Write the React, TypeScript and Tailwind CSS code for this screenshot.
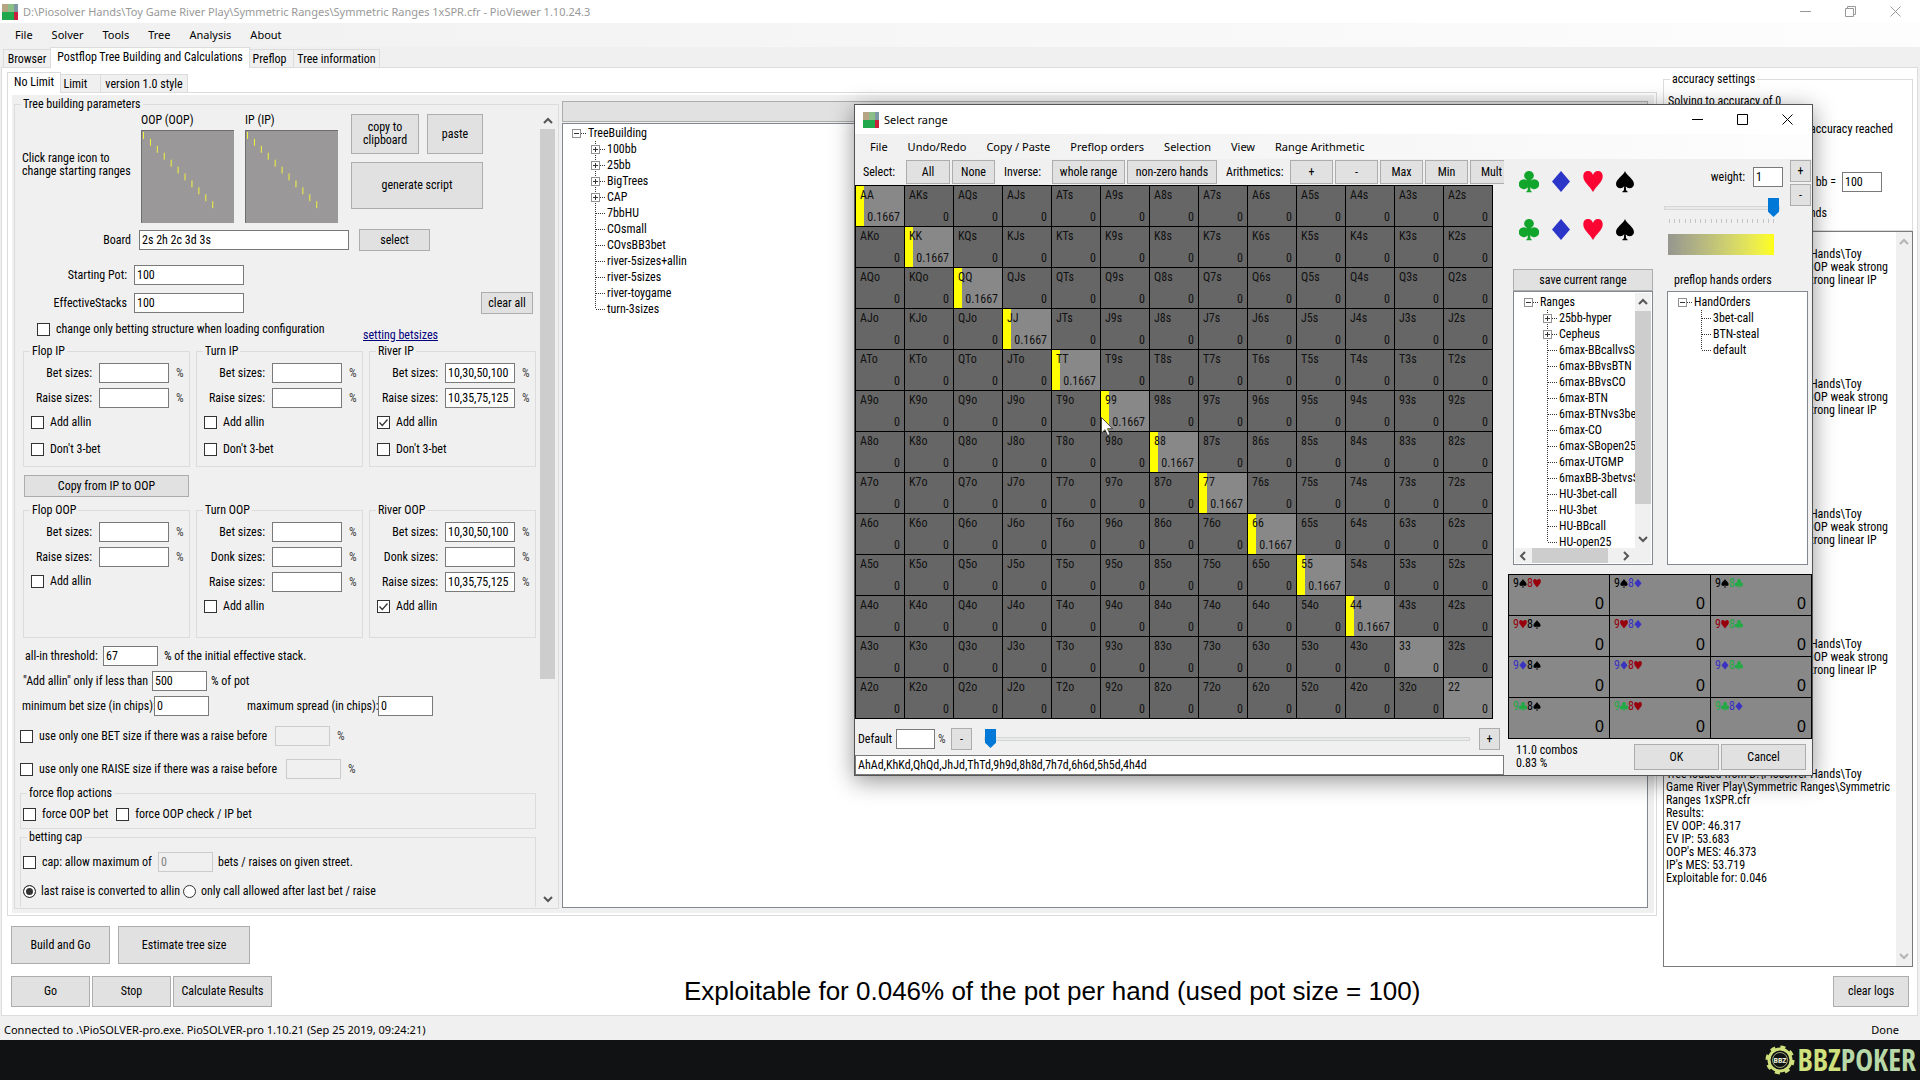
import { type ReactNode } from 'react';
import clsx from 'clsx';

const RANKS = ['A', 'K', 'Q', 'J', 'T', '9', '8', '7', '6', '5', '4', '3', '2'];

const TREE_CONFIGS: TreeNode[] = [
  { label: '100bb', expandable: true },
  { label: '25bb', expandable: true },
  { label: 'BigTrees', expandable: true },
  { label: 'CAP', expandable: true },
  { label: '7bbHU' },
  { label: 'COsmall' },
  { label: 'COvsBB3bet' },
  { label: 'river-5sizes+allin' },
  { label: 'river-5sizes' },
  { label: 'river-toygame' },
  { label: 'turn-3sizes' },
];

const RANGES: TreeNode[] = [
  { label: '25bb-hyper', expandable: true },
  { label: 'Cepheus', expandable: true },
  { label: '6max-BBcallvsSB' },
  { label: '6max-BBvsBTN' },
  { label: '6max-BBvsCO' },
  { label: '6max-BTN' },
  { label: '6max-BTNvs3bet' },
  { label: '6max-CO' },
  { label: '6max-SBopen25' },
  { label: '6max-UTGMP' },
  { label: '6maxBB-3betvsSB' },
  { label: 'HU-3bet-call' },
  { label: 'HU-3bet' },
  { label: 'HU-BBcall' },
  { label: 'HU-open25' },
];

const HAND_ORDERS: TreeNode[] = [{ label: '3bet-call' }, { label: 'BTN-steal' }, { label: 'default' }];

const LOG_BLOCK = [
  'Tree loaded from D:\\Piosolver Hands\\Toy',
  'Game River Play\\IP Strong vs OOP weak strong',
  'linear IP condensed range vs strong linear IP',
  '', '', '', '', '', '', '',
];

const LOG_TEXT = [
  '',
  ...LOG_BLOCK,
  ...LOG_BLOCK,
  ...LOG_BLOCK,
  ...LOG_BLOCK,
  'Tree loaded from D:\\Piosolver Hands\\Toy',
  'Game River Play\\Symmetric Ranges\\Symmetric',
  'Ranges 1xSPR.cfr',
  'Results:',
  'EV OOP: 46.317',
  'EV IP: 53.683',
  "OOP's MES: 46.373",
  "IP's MES: 53.719",
  'Exploitable for: 0.046',
].join('\n');

type Suit = 'c' | 'd' | 'h' | 's';

const SUIT_PATHS: Record<Suit, string> = {
  c: 'M10 0a4.6 4.6 0 0 1 3.2 8.1l-1.6 1.7a5 5 0 1 1-.4 6.4l.3 3.3 1.3 1.2v.6H7.200v-.6l1.3-1.2.3-3.3a5 5 0 1 1-.4-6.4L6.800 8.100A4.600 4.600 0 0 1 10 0z',
  d: 'M10 0l9 10.500L10 21 1 10.500z',
  h: 'M10 21C7 15 0 11 .3 5.200 .5 1 3 0 5 0c3 0 4.300 1.800 5 4 .7-2.200 2-4 5-4 2 0 4.500 1 4.700 5.200C20 11 13 15 10 21z',
  s: 'M10 0c1.500 4.500 9 8 9 13 0 2.600-2 4.300-4.300 4.300-1.800 0-3-.8-3.900-2l.3 4 1.500 1.300v.6H7.400v-.6l1.500-1.300.3-4c-.9 1.200-2.100 2-3.900 2C3 17.300 1 15.600 1 13c0-5 7.500-8.500 9-13z',
};

const SUIT_FILL: Record<Suit, string> = { c: '#12a52b', d: '#2b36c9', h: '#fb0532', s: '#000000' };
const CARD_FILL: Record<Suit, string> = { c: '#22aa44', d: '#3a32c0', h: '#98000c', s: '#000000' };

const COMBOS: [Suit, Suit][][] = [
  [['s', 'h'], ['s', 'd'], ['s', 'c']],
  [['h', 's'], ['h', 'd'], ['h', 'c']],
  [['d', 's'], ['d', 'h'], ['d', 'c']],
  [['c', 's'], ['c', 'h'], ['c', 'd']],
];

interface TreeNode {
  label: string;
  expandable?: boolean;
}

function Button({ className, children }: { className?: string; children: ReactNode }) {
  return (
    <button
      type="button"
      className={clsx('shrink-0 border border-[#adadad] bg-[#e1e1e1] hover:bg-[#e5f1fb]', className)}
    >
      {children}
    </button>
  );
}

function TextBox({ label, value = '', className, disabled }: { label: string; value?: string; className?: string; disabled?: boolean }) {
  return (
    <input
      type="text"
      aria-label={label}
      defaultValue={value}
      disabled={disabled}
      className={clsx(
        'h-5 shrink-0 border px-[2px] outline-none',
        disabled ? 'border-[#cccccc] bg-[#f0f0f0] text-[#808080]' : 'border-[#7a7a7a] bg-white',
        className,
      )}
    />
  );
}

function CheckBox({ label, checked, className }: { label: string; checked?: boolean; className?: string }) {
  return (
    <label className={clsx('flex h-[13px] items-center gap-[6px] whitespace-nowrap', className)}>
      <span className="grid size-[13px] shrink-0">
        <input
          type="checkbox"
          defaultChecked={checked}
          className="peer size-[13px] appearance-none border border-[#333333] bg-white [grid-area:1/1]"
        />
        <svg className="pointer-events-none hidden size-[13px] [grid-area:1/1] peer-checked:block" viewBox="0 0 13 13" fill="none" stroke="#333333" strokeWidth={1.3}>
          <path d="M2.500 6.500l2.800 3 5.200-6" />
        </svg>
      </span>
      {label}
    </label>
  );
}

function Radio({ label, checked }: { label: string; checked?: boolean }) {
  return (
    <label className="flex h-[13px] items-center gap-[5px] whitespace-nowrap">
      <input
        type="radio"
        name="cap-mode"
        defaultChecked={checked}
        className="size-[13px] appearance-none rounded-full border border-[#333333] bg-white checked:bg-[#333333] checked:shadow-[inset_0_0_0_2px_white]"
      />
      {label}
    </label>
  );
}

function Group({ title, className, children }: { title: string; className?: string; children?: ReactNode }) {
  return (
    <fieldset className={clsx('min-w-0 border border-[#dcdcdc]', className)}>
      <legend className="ml-[6px] px-[2px]">{title}</legend>
      {children}
    </fieldset>
  );
}

function SizeRow({ label, value }: { label: string; value?: string }) {
  return (
    <div className="flex items-center gap-[7px]">
      <span className="w-[68px] text-right whitespace-nowrap">{label}:</span>
      <TextBox label={label} value={value} className="w-[70px]" />
      <span className="text-[#444444]">%</span>
    </div>
  );
}

interface StreetProps {
  title: string;
  sizes: [string, string?][];
  allin?: boolean;
  threeBet?: boolean;
  className: string;
}

function StreetGroup({ title, sizes, allin, threeBet, className }: StreetProps) {
  return (
    <Group title={title} className={className}>
      <div className="flex flex-col gap-[5px] pt-[5px]">
        {sizes.map(([label, value]) => (
          <SizeRow key={label} label={label} value={value} />
        ))}
      </div>
      <CheckBox label="Add allin" checked={allin} className="mt-2 ml-[7px]" />
      {threeBet && <CheckBox label="Don't 3-bet" className="mt-[14px] ml-[7px]" />}
    </Group>
  );
}

function Chevron({ dir, className }: { dir: 'up' | 'down' | 'left' | 'right'; className?: string }) {
  const paths = { up: 'M1 7l4-4 4 4', down: 'M1 3l4 4 4-4', left: 'M7 1L3 5l4 4', right: 'M3 1l4 4-4 4' };
  return (
    <svg className={clsx('size-[10px] shrink-0', className)} viewBox="0 0 10 10" fill="none" stroke="currentColor" strokeWidth={2}>
      <path d={paths[dir]} />
    </svg>
  );
}

function TreeGutter({ expandable, expanded, isRoot, isLast }: { expandable?: boolean; expanded?: boolean; isRoot?: boolean; isLast?: boolean }) {
  return (
    <svg className="h-4 w-[17px] shrink-0" viewBox="0 0 17 16" fill="none" stroke="#333333" shapeRendering="crispEdges">
      {!isRoot && <path d={isLast ? 'M5.500 0V8' : 'M5.500 0V16'} strokeDasharray="1 1" />}
      <path d="M6 8.500H15" strokeDasharray="1 1" />
      {expandable && (
        <>
          <rect x="1.500" y="4.500" width="8" height="8" fill="#ffffff" stroke="#919191" />
          <path d={expanded ? 'M3 8.500H8' : 'M3 8.500H8M5.500 6V11'} stroke="#333333" />
        </>
      )}
    </svg>
  );
}

function Tree({ root, nodes }: { root: string; nodes: TreeNode[] }) {
  return (
    <ul className="min-w-0 flex-1 overflow-hidden pt-px pl-2 leading-4 whitespace-nowrap">
      <li>
        <div className="flex">
          <TreeGutter isRoot expandable expanded />
          {root}
        </div>
        <ul className="pl-[19px]">
          {nodes.map((n, i) => (
            <li key={n.label} className="flex">
              <TreeGutter expandable={n.expandable} isLast={i === nodes.length - 1} />
              {n.label}
            </li>
          ))}
        </ul>
      </li>
    </ul>
  );
}

function AppIcon() {
  return (
    <svg className="size-4 shrink-0" viewBox="0 0 16 16">
      <rect width="16" height="16" fill="#8cbf88" />
      <rect width="6" height="8" fill="#b5a582" />
      <rect x="12" width="4" height="8" fill="#7d98a4" />
      <rect y="8" width="12" height="8" fill="#22a84c" />
      <rect x="12" y="8" width="4" height="8" fill="#c8203c" />
    </svg>
  );
}

function WindowButtons({ restored }: { restored?: boolean }) {
  const button = 'flex w-[45px] items-center justify-center';
  return (
    <div className="ml-auto flex self-stretch pr-[2px]">
      <button type="button" aria-label="Minimize" className={button}>
        <svg className="size-[11px]" viewBox="0 0 11 11" fill="none" stroke="currentColor"><path d="M0 5.500h11" /></svg>
      </button>
      <button type="button" aria-label="Maximize" className={button}>
        <svg className="size-[11px]" viewBox="0 0 11 11" fill="none" stroke="currentColor">
          {restored ? <path d="M.5 2.500h8v8h-8zM2.500 2.500V.5h8v8H8.500" /> : <path d="M.5.5h10v10H.5z" />}
        </svg>
      </button>
      <button type="button" aria-label="Close" className={button}>
        <svg className="size-[11px]" viewBox="0 0 11 11" fill="none" stroke="currentColor"><path d="M.5.5l10 10M10.500.5l-10 10" /></svg>
      </button>
    </div>
  );
}

function MenuBar({ items, className }: { items: string[]; className: string }) {
  return (
    <nav className={clsx('flex items-center bg-linear-to-r from-[#f0f0f0] to-[#fdfdfd] px-[15px] font-["Noto_Sans",sans-serif] text-[11px]', className)}>
      {items.map((item) => (
        <button key={item} type="button" className="whitespace-nowrap">{item}</button>
      ))}
    </nav>
  );
}

function RangeThumb({ label }: { label: string }) {
  return (
    <div className="w-[94px] pt-[3px]">
      <div>{label}</div>
      <button type="button" aria-label={`Edit range ${label}`} className="mt-[3px] block h-[93px] w-[93px] border-t border-l border-[#6e6e6e] bg-[#9a9899]">
        <svg className="block h-full w-full" viewBox="0 0 93 93">
          {RANKS.slice(0, 11).map((r, i) => (
            <rect key={r} x={1 + i * 7} y={1 + i * 7} width="1" height="7" fill="#f4f43c" />
          ))}
        </svg>
      </button>
    </div>
  );
}

function TreeForm() {
  return (
    <div className="min-w-0 flex-1">
      <div className="flex h-[118px]">
        <p className="w-[126px] pt-[41px] pl-[7px] whitespace-nowrap">
          Click range icon to
          <br />
          change starting ranges
        </p>
        <div className="flex gap-[10px]">
          <RangeThumb label="OOP (OOP)" />
          <RangeThumb label="IP (IP)" />
        </div>
        <div className="ml-3 flex w-[132px] flex-wrap content-start justify-between gap-y-2 pt-[3px]">
          <Button className="h-10 w-[68px]">
            copy to
            <br />
            clipboard
          </Button>
          <Button className="h-10 w-14">paste</Button>
          <Button className="h-[47px] w-full">generate script</Button>
        </div>
      </div>

      <div className="flex items-center">
        <span className="w-[116px] text-right">Board</span>
        <TextBox label="Board" value="2s 2h 2c 3d 3s" className="ml-2 w-[210px]" />
        <Button className="ml-[10px] h-[22px] w-[71px]">select</Button>
      </div>
      <div className="mt-[14px] flex items-center gap-[7px]">
        <span className="w-[112px] text-right">Starting Pot:</span>
        <TextBox label="Starting Pot" value="100" className="w-[110px]" />
      </div>
      <div className="mt-[7px] flex items-center gap-[7px]">
        <span className="w-[112px] text-right">EffectiveStacks</span>
        <TextBox label="EffectiveStacks" value="100" className="w-[110px]" />
        <Button className="mr-[7px] ml-auto h-[22px] w-[52px]">clear all</Button>
      </div>
      <div className="mt-[9px] flex h-[22px] items-start pl-[22px] whitespace-nowrap">
        <CheckBox label="change only betting structure when loading configuration" className="w-[326px]" />
        <a href="#betsizes" className="mt-[6px] text-[#00007c] underline">setting betsizes</a>
      </div>

      <div className="grid grid-cols-3 gap-[6px] pr-1 pl-2">
        <StreetGroup title="Flop IP" sizes={[['Bet sizes'], ['Raise sizes']]} threeBet className="h-[122px]" />
        <StreetGroup title="Turn IP" sizes={[['Bet sizes'], ['Raise sizes']]} threeBet className="h-[122px]" />
        <StreetGroup title="River IP" sizes={[['Bet sizes', '10,30,50,100'], ['Raise sizes', '10,35,75,125']]} allin threeBet className="h-[122px]" />
      </div>
      <Button className="mt-2 ml-[9px] block h-[22px] w-[165px]">Copy from IP to OOP</Button>
      <div className="mt-[7px] grid grid-cols-3 gap-[6px] pr-1 pl-2">
        <StreetGroup title="Flop OOP" sizes={[['Bet sizes'], ['Raise sizes']]} className="h-[134px]" />
        <StreetGroup title="Turn OOP" sizes={[['Bet sizes'], ['Donk sizes'], ['Raise sizes']]} className="h-[134px]" />
        <StreetGroup title="River OOP" sizes={[['Bet sizes', '10,30,50,100'], ['Donk sizes'], ['Raise sizes', '10,35,75,125']]} allin className="h-[134px]" />
      </div>

      <div className="mt-2 flex flex-col gap-[5px] whitespace-nowrap">
        <div className="flex items-center pl-[10px]">
          <span className="w-[78px]">all-in threshold:</span>
          <TextBox label="all-in threshold" value="67" className="w-[55px]" />
          <span className="ml-[6px]">% of the initial effective stack.</span>
        </div>
        <div className="flex items-center pl-2">
          <span className="w-[129px]">&quot;Add allin&quot; only if less than</span>
          <TextBox label="Add allin only if less than" value="500" className="w-[55px]" />
          <span className="ml-1">% of pot</span>
        </div>
        <div className="flex items-center pl-[7px]">
          <span className="w-[132px]">minimum bet size (in chips):</span>
          <TextBox label="minimum bet size" value="0" className="w-[55px]" />
          <span className="ml-[38px] w-[131px]">maximum spread (in chips):</span>
          <TextBox label="maximum spread" value="0" className="w-[55px]" />
        </div>
      </div>
      <div className="mt-[10px] flex items-center pl-[5px]">
        <CheckBox label="use only one BET size if there was a raise before" className="w-[255px]" />
        <TextBox label="BET size" disabled className="w-[55px]" />
        <span className="ml-[7px] text-[#444444]">%</span>
      </div>
      <div className="mt-[13px] flex items-center pl-[5px]">
        <CheckBox label="use only one RAISE size if there was a raise before" className="w-[266px]" />
        <TextBox label="RAISE size" disabled className="w-[55px]" />
        <span className="ml-[7px] text-[#444444]">%</span>
      </div>

      <Group title="force flop actions" className="mt-2 mr-1 ml-[5px] h-[42px]">
        <div className="flex gap-2 pt-2 pl-[2px]">
          <CheckBox label="force OOP bet" />
          <CheckBox label="force OOP check / IP bet" />
        </div>
      </Group>
      <Group title="betting cap" className="mt-[2px] mr-1 ml-[5px] h-[76px] border-b-0">
        <div className="flex items-center pt-2 pl-[2px]">
          <CheckBox label="cap: allow maximum of" className="w-[135px]" />
          <TextBox label="cap" value="0" disabled className="w-[55px]" />
          <span className="ml-[5px]">bets / raises on given street.</span>
        </div>
        <div className="mt-[13px] flex gap-[3px] pl-[2px]">
          <Radio label="last raise is converted to allin" checked />
          <Radio label="only call allowed after last bet / raise" />
        </div>
      </Group>
    </div>
  );
}

function Tab({ active, className, children }: { active?: boolean; className: string; children: ReactNode }) {
  return (
    <button
      type="button"
      role="tab"
      aria-selected={!!active}
      className={clsx(
        'border border-[#dcdcdc] whitespace-nowrap',
        active ? 'z-10 -mb-px h-[21px] border-b-0 bg-white pb-[2px]' : 'h-[18px] border-b-0 bg-[#f0f0f0] pt-[2px]',
        className,
      )}
    >
      {children}
    </button>
  );
}

function AccuracyPanel() {
  return (
    <div className="flex w-[250px] shrink-0 flex-col pt-[5px]">
      <Group title="accuracy settings" className="h-[158px]">
        <div className="px-1 pt-[9px]">
          <p>Solving to accuracy of 0</p>
          <p className="mt-[15px] pr-[15px] text-right">Stop when accuracy reached</p>
          <div className="mt-9 flex items-center justify-end gap-[6px] pr-[26px]">
            <label htmlFor="bb">show in bb/100, bb =</label>
            <input id="bb" type="text" defaultValue="100" className="h-5 w-10 border border-[#7a7a7a] bg-white px-[2px]" />
          </div>
          <p className="mt-[15px] w-[159px] text-right">milliseconds</p>
        </div>
      </Group>
      <div className="flex min-h-0 flex-1 border border-[#7a7a7a] bg-white">
        <textarea readOnly aria-label="Log" defaultValue={LOG_TEXT} wrap="off" className="min-w-0 flex-1 resize-none overflow-hidden pt-[3px] pl-[2px] outline-none" />
        <div className="flex w-4 flex-col items-center justify-between bg-[#f0f0f0] py-[5px] text-[#b4b4b4]">
          <Chevron dir="up" />
          <Chevron dir="down" />
        </div>
      </div>
      <Button className="mt-[9px] mr-1 mb-2 ml-auto h-[31px] w-[76px]">clear logs</Button>
    </div>
  );
}

function HandMatrix() {
  return (
    <table className="w-[638px] table-fixed border-collapse border border-black bg-[#666666]">
      <tbody>
        {RANKS.map((row, r) => (
          <tr key={row}>
            {RANKS.map((col, c) => {
              const hand = r === c ? row + col : c > r ? `${row}${col}s` : `${col}${row}o`;
              const weight = r === c && r < 11 ? 0.1667 : 0;
              return (
                <td
                  key={col}
                  className={clsx('border border-black bg-linear-to-r from-[#ffff00] to-[#ffff00] bg-no-repeat p-0', r === c ? 'bg-[#888888]' : 'bg-[#666666]')}
                  style={{ backgroundSize: `${weight * 100}% 100%` }}
                >
                  <div className="flex h-10 flex-col justify-between pt-[3px] pr-1 pb-[2px] pl-1 text-[#111111]">
                    <span>{hand}</span>
                    <span className="text-right">{weight}</span>
                  </div>
                </td>
              );
            })}
          </tr>
        ))}
      </tbody>
    </table>
  );
}

function SuitIcon({ suit, fill, className }: { suit: Suit; fill: string; className: string }) {
  return (
    <svg className={className} viewBox="0 0 20 22">
      <path d={SUIT_PATHS[suit]} fill={fill} />
    </svg>
  );
}

function ComboTable() {
  return (
    <table className="w-full table-fixed border-collapse border border-black bg-[#888888]">
      <tbody>
        {COMBOS.map((row, i) => (
          <tr key={i}>
            {row.map(([a, b]) => (
              <td key={a + b} className="border border-black p-0">
                <div className="flex h-10 flex-col justify-between pt-[2px] pr-[5px] pl-1">
                  <span className="flex items-center">
                    <span style={{ color: CARD_FILL[a] }}>9</span>
                    <SuitIcon suit={a} fill={CARD_FILL[a]} className="h-[9px] w-2" />
                    <span style={{ color: CARD_FILL[b] }}>8</span>
                    <SuitIcon suit={b} fill={CARD_FILL[b]} className="h-[9px] w-2" />
                  </span>
                  <span className="text-right font-['Liberation_Sans',Arial,sans-serif] text-[16px] leading-[22px]">0</span>
                </div>
              </td>
            ))}
          </tr>
        ))}
      </tbody>
    </table>
  );
}

const SLIDER =
  'appearance-none bg-transparent [&::-webkit-slider-runnable-track]:h-1 [&::-webkit-slider-runnable-track]:border [&::-webkit-slider-runnable-track]:border-[#d6d6d6] [&::-webkit-slider-runnable-track]:bg-[#e7eaea] [&::-webkit-slider-thumb]:-mt-[9px] [&::-webkit-slider-thumb]:h-[19px] [&::-webkit-slider-thumb]:w-[11px] [&::-webkit-slider-thumb]:appearance-none [&::-webkit-slider-thumb]:bg-[#0078d7] [&::-webkit-slider-thumb]:[clip-path:polygon(0_0,100%_0,100%_72%,50%_100%,0_72%)]';

function SelectRangeDialog() {
  return (
    <div role="dialog" aria-label="Select range" className="absolute top-[104px] left-[854px] z-20 border border-[#555555] bg-[#f0f0f0] shadow-[0_5px_22px_rgba(0,0,0,0.42)]">
      <div className="flex h-[29px] items-center gap-[5px] bg-white pl-2 font-['Noto_Sans',sans-serif] text-[11px]">
        <AppIcon />
        Select range
        <WindowButtons />
      </div>
      <MenuBar
        items={['File', 'Undo/Redo', 'Copy / Paste', 'Preflop orders', 'Selection', 'View', 'Range Arithmetic']}
        className="h-[25px] gap-5"
      />
      <div className="flex">
        <div className="w-[649px]">
          <div className="flex h-[26px] items-center overflow-hidden pl-2 whitespace-nowrap">
            <span className="w-[43px] shrink-0">Select:</span>
            <Button className="h-6 w-11">All</Button>
            <Button className="ml-[2px] h-6 w-[43px]">None</Button>
            <span className="ml-[9px] w-12 shrink-0">Inverse:</span>
            <Button className="h-6 w-[73px]">whole range</Button>
            <Button className="ml-[2px] h-6 w-[90px]">non-zero hands</Button>
            <span className="ml-[9px] w-16 shrink-0">Arithmetics:</span>
            <Button className="h-6 w-[43px]">+</Button>
            <Button className="ml-[2px] h-6 w-[43px]">-</Button>
            <Button className="ml-[2px] h-6 w-[43px]">Max</Button>
            <Button className="ml-[2px] h-6 w-[43px]">Min</Button>
            <Button className="ml-[2px] h-6 w-[43px]">Mult</Button>
          </div>
          <HandMatrix />
          <div className="mt-[9px] flex items-center pr-1 pl-[3px]">
            <label htmlFor="default-pct" className="w-[38px]">Default</label>
            <input id="default-pct" type="text" className="h-5 w-[39px] border border-[#7a7a7a] bg-white px-[2px]" />
            <span className="ml-[3px] w-[13px] text-[#444444]">%</span>
            <Button className="h-[22px] w-[21px]">-</Button>
            <input type="range" aria-label="Range percent" defaultValue={0} className={clsx('mr-[9px] ml-3 h-[22px] min-w-0 flex-1', SLIDER)} />
            <Button className="h-[22px] w-[21px]">+</Button>
          </div>
          <TextBox label="Range text" value="AhAd,KhKd,QhQd,JhJd,ThTd,9h9d,8h8d,7h7d,6h6d,5h5d,4h4d" className="mt-[5px] w-full" />
        </div>

        <div className="flex w-[308px] flex-col pl-1">
          <div className="flex justify-between pr-px pl-[10px]">
            <div className="grid grid-cols-4 content-start gap-x-3 gap-y-[26px] pt-3 pl-px">
              {[0, 1].map((row) =>
                (['c', 'd', 'h', 's'] as Suit[]).map((suit) => (
                  <button key={suit + row} type="button" aria-label={`Suit ${suit} ${row + 1}`}>
                    <SuitIcon suit={suit} fill={SUIT_FILL[suit]} className="block h-[22px] w-5" />
                  </button>
                )),
              )}
            </div>
            <div className="flex h-[110px] pt-px">
              <div className="w-[126px] pt-[7px]">
                <div className="flex items-center justify-end gap-2 pr-[7px]">
                  <label htmlFor="weight">weight:</label>
                  <input id="weight" type="text" defaultValue="1" className="h-5 w-[30px] border border-[#7a7a7a] bg-white px-[2px]" />
                </div>
                <input type="range" aria-label="Weight" defaultValue={100} className={clsx('mt-[10px] block h-[22px] w-[116px]', SLIDER)} />
                <svg className="ml-[5px] block h-1 w-[105px]" viewBox="0 0 105 4" stroke="#c4c4c4" shapeRendering="crispEdges">
                  {Array.from({ length: 21 }).map((_, i) => (
                    <path key={i} d={`M${i * 5.2 + 0.5} 0v4`} />
                  ))}
                </svg>
                <div className="mt-[11px] ml-1 h-[21px] w-[106px] bg-linear-to-r from-[#96968f] to-[#ffff10]" />
              </div>
              <div className="flex flex-col gap-[2px]">
                <Button className="h-[22px] w-[21px]">+</Button>
                <Button className="h-[22px] w-[21px]">-</Button>
              </div>
            </div>
          </div>

          <div className="flex items-end gap-[14px] pr-1 pl-[5px]">
            <div className="w-[140px]">
              <Button className="h-[22px] w-full">save current range</Button>
              <div className="h-[274px] border border-[#828790] bg-white p-px">
                <div className="flex h-[255px] overflow-hidden">
                  <Tree root="Ranges" nodes={RANGES} />
                  <div className="flex w-4 flex-col items-center bg-[#f0f0f0] text-[#555555]">
                    <Chevron dir="up" className="my-1" />
                    <div className="h-[193px] w-full bg-[#cdcdcd]" />
                    <Chevron dir="down" className="mt-auto mb-1" />
                  </div>
                </div>
                <div className="flex h-[15px] items-center bg-[#f0f0f0] pr-[20px] pl-[3px] text-[#555555]">
                  <Chevron dir="left" />
                  <div className="ml-1 h-full w-[76px] bg-[#cdcdcd]" />
                  <Chevron dir="right" className="ml-auto" />
                </div>
              </div>
            </div>
            <div className="min-w-0 flex-1">
              <div className="mb-1 pl-[7px]">preflop hands orders</div>
              <div className="flex h-[274px] border border-[#828790] bg-white p-px">
                <Tree root="HandOrders" nodes={HAND_ORDERS} />
              </div>
            </div>
          </div>

          <div className="mt-[9px]">
            <ComboTable />
          </div>
          <div className="flex gap-[2px] pt-[5px] pr-[6px] pl-2">
            <p>
              11.0 combos
              <br />
              0.83 %
            </p>
            <Button className="ml-auto h-[26px] w-[85px]">OK</Button>
            <Button className="h-[26px] w-[85px]">Cancel</Button>
          </div>
        </div>
      </div>
      <svg className="pointer-events-none absolute top-[312px] left-[246px] h-[19px] w-3" viewBox="0 0 12 19">
        <path d="M.5.5v15.500l3.500-3.300 2.600 5.800 2.500-1.100-2.600-5.700h5z" fill="#ffffff" stroke="#222222" strokeWidth={0.8} />
      </svg>
    </div>
  );
}

function Logo() {
  return (
    <div className="flex items-center gap-[3px]">
      <svg className="size-[30px]" viewBox="0 0 30 30">
        <circle cx="15" cy="15" r="13" fill="none" stroke="#cfe07c" strokeWidth="3" strokeDasharray="5 5.210" />
        <circle cx="15" cy="15" r="11" fill="none" stroke="#cfe07c" strokeWidth="3" />
        <circle cx="15" cy="15" r="7.500" fill="none" stroke="#9aa77a" strokeWidth="1" />
        <text x="15" y="18" textAnchor="middle" fontSize="8" fontWeight="bold" fill="#e6ecd2" className="font-['Roboto_Condensed','Liberation_Sans',sans-serif]">
          BBZ
        </text>
      </svg>
      <span className="font-['Open_Sans_Condensed','Roboto_Condensed','Liberation_Sans',sans-serif] text-[30px] leading-none font-bold">
        <span className="text-[#cfe07c]">BBZ</span>
        <span className="text-[#b8d8a8]">POKER</span>
      </span>
    </div>
  );
}

export default function App() {
  return (
    <div className="relative flex min-h-screen flex-col bg-[#f0f0f0] font-['Roboto_Condensed','Liberation_Sans',Arial,sans-serif] text-[12px] leading-[13px] text-black">
      <header className="flex h-[23px] items-center gap-[5px] bg-white pl-[2px] font-['Noto_Sans',sans-serif] text-[11px] text-[#999999]">
        <AppIcon />
        D:\Piosolver Hands\Toy Game River Play\Symmetric Ranges\Symmetric Ranges 1xSPR.cfr - PioViewer 1.10.24.3
        <WindowButtons restored />
      </header>
      <MenuBar items={['File', 'Solver', 'Tools', 'Tree', 'Analysis', 'About']} className="h-6 gap-[19px] pb-[2px]" />

      <div role="tablist" className="flex h-5 items-end pl-[3px]">
        <Tab className="w-[47px] border-r-0">Browser</Tab>
        <Tab active className="w-[200px]">Postflop Tree Building and Calculations</Tab>
        <Tab className="w-11 border-l-0 pr-1">Preflop</Tab>
        <Tab className="w-[86px] border-l-0">Tree information</Tab>
      </div>

      <main className="mr-[2px] ml-px flex flex-1 gap-[6px] border border-[#dcdcdc] bg-white pr-1 pl-[5px]">
        <div className="flex min-w-0 flex-1 flex-col pt-1">
          <div role="tablist" className="flex h-5 items-end">
            <Tab active className="w-[54px]">No Limit</Tab>
            <Tab className="w-10 border-l-0 pr-[10px]">Limit</Tab>
            <Tab className="w-[87px] border-l-0">version 1.0 style</Tab>
          </div>
          <div className="flex flex-1 border border-[#dcdcdc] p-[2px] pl-1">
            <div className="flex flex-1 gap-[3px] bg-[#f0f0f0] pr-[6px] pb-1 pl-[2px]">
              <Group title="Tree building parameters" className="mt-[3px] w-[545px] shrink-0">
                <div className="flex h-full">
                  <TreeForm />
                  <div className="mr-[3px] flex w-[15px] flex-col items-center text-[#555555]">
                    <Chevron dir="up" className="mt-[5px] mb-[3px]" />
                    <div className="h-[550px] w-full bg-[#cdcdcd]" />
                    <Chevron dir="down" className="mt-auto mb-1" />
                  </div>
                </div>
              </Group>
              <div className="flex min-w-0 flex-1 flex-col pt-[6px] pb-px">
                <div className="mb-px h-[21px] border border-[#adadad] bg-[#e1e1e1]" />
                <div className="flex flex-1 border border-[#828790] bg-white">
                  <Tree root="TreeBuilding" nodes={TREE_CONFIGS} />
                </div>
              </div>
            </div>
          </div>

          <div className="flex flex-col gap-3 pt-[10px] pb-2 pl-1">
            <div className="flex gap-2">
              <Button className="h-[38px] w-[99px]">Build and Go</Button>
              <Button className="h-[38px] w-[132px]">Estimate tree size</Button>
            </div>
            <div className="flex items-center gap-[2px]">
              <Button className="h-[31px] w-[79px]">Go</Button>
              <Button className="h-[31px] w-[79px]">Stop</Button>
              <Button className="h-[31px] w-[99px]">Calculate Results</Button>
              <div className="ml-[410px] font-['Liberation_Sans',Arial,sans-serif] text-[26px] leading-[31px] whitespace-nowrap">
                Exploitable for 0.046% of the pot per hand (used pot size = 100)
              </div>
            </div>
          </div>
        </div>
        <AccuracyPanel />
      </main>

      <footer className="flex h-6 items-center justify-between pt-[3px] pr-[21px] pl-1 font-['Noto_Sans',sans-serif] text-[11px]">
        <span>Connected to .\PioSOLVER-pro.exe. PioSOLVER-pro 1.10.21 (Sep 25 2019, 09:24:21)</span>
        <span>Done</span>
      </footer>
      <div className="flex h-10 items-center justify-end bg-[#111214] pr-1">
        <Logo />
      </div>

      <SelectRangeDialog />
    </div>
  );
}
